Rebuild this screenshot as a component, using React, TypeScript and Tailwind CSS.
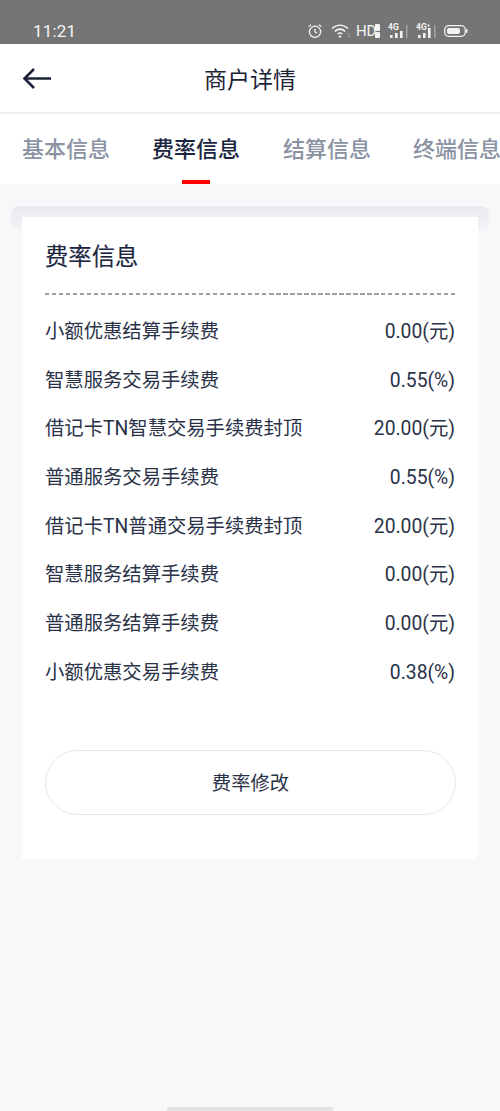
const FONT = "font-['Roboto','Noto_Sans_CJK_SC',sans-serif]";

const rows: [string, string][] = [
  ["小额优惠结算手续费", "0.00(元)"],
  ["智慧服务交易手续费", "0.55(%)"],
  ["借记卡TN智慧交易手续费封顶", "20.00(元)"],
  ["普通服务交易手续费", "0.55(%)"],
  ["借记卡TN普通交易手续费封顶", "20.00(元)"],
  ["智慧服务结算手续费", "0.00(元)"],
  ["普通服务结算手续费", "0.00(元)"],
  ["小额优惠交易手续费", "0.38(%)"],
];

function StatusIcons() {
  return (
    <div className="flex items-center text-[#f4f4f4]">
      <svg width="16" height="16" viewBox="0 0 16 16" fill="none" stroke="currentColor" strokeWidth="1.3" className="mr-[8px]">
        <circle cx="8" cy="8.8" r="5.6" />
        <path d="M8 5.8V9l2 1.2M1.8 3.6 4 1.8M14.2 3.6 12 1.8" />
      </svg>
      <svg width="20" height="16" viewBox="0 0 20 16" fill="none" stroke="currentColor" strokeWidth="1.5" className="mr-[5px]">
        <path d="M1 5.5C6 1 12 1 17 5.5M3.8 8.4C7 5.6 11 5.6 14.2 8.4M6.6 11C8 9.8 10 9.8 11.4 11" />
        <circle cx="9" cy="13.6" r="1.2" fill="currentColor" stroke="none" />
        <path d="M17 10.5l1.5 1.5M17 13.5h1.5" strokeWidth="0.8" opacity="0.7" />
      </svg>
      <span className="text-[15px] leading-none w-[19px] tracking-[-0.3px]">HD</span>
      <div className="flex flex-col gap-px mr-[8px]">
        <span className="w-[5px] h-[7px] bg-[#f4f4f4] rounded-[1px]" />
        <span className="w-[5px] h-[6px] bg-[#f4f4f4] rounded-[1px]" />
      </div>
      <svg width="20" height="16" viewBox="0 0 20 16" className="mr-[8px]">
        <text x="0" y="7" fontSize="8.5" fontWeight="700" fill="currentColor" fontFamily="Roboto">4G</text>
        <rect x="2" y="12" width="2.6" height="3" fill="currentColor" />
        <rect x="7" y="10" width="2.6" height="5" fill="currentColor" />
        <rect x="12" y="8" width="2.6" height="7" fill="currentColor" />
        <rect x="18" y="2" width="1.6" height="13" fill="#a0a0a0" />
      </svg>
      <svg width="20" height="16" viewBox="0 0 20 16" className="mr-[8px]">
        <text x="0" y="7" fontSize="8.5" fontWeight="700" fill="currentColor" fontFamily="Roboto">4G⁺</text>
        <rect x="2" y="12" width="2.6" height="3" fill="currentColor" />
        <rect x="7" y="10" width="2.6" height="5" fill="currentColor" />
        <rect x="12" y="5" width="2.6" height="10" fill="currentColor" />
        <rect x="18" y="2" width="1.6" height="13" fill="#a0a0a0" />
      </svg>
      <svg width="24" height="14" viewBox="0 0 24 14" fill="none">
        <rect x="0.7" y="1.7" width="20.6" height="10.6" rx="4" stroke="currentColor" strokeWidth="1.3" />
        <rect x="3" y="4" width="13" height="6" rx="2" fill="currentColor" />
        <rect x="22.2" y="5" width="1.4" height="4" rx="0.7" fill="currentColor" />
      </svg>
    </div>
  );
}

export default function App() {
  return (
    <div className={`${FONT} w-[500px] h-[1111px] relative overflow-hidden bg-[#f7f8fa] flex flex-col`}>
      <div className="h-[44px] bg-[#757575] flex items-end pb-[1px] pl-[33px] pr-[32px] justify-between">
        <span className="text-[#f4f4f4] text-[17px] leading-[24px] tracking-[0.2px]">11:21</span>
        <div className="pb-[4px]"><StatusIcons /></div>
      </div>

      <div className="h-[70px] bg-white border-b-[2px] border-[#efefef] flex items-center justify-center relative">
        <svg className="absolute left-[22px] top-[22px]" width="30" height="24" viewBox="0 0 30 24" fill="none" stroke="#1b2336" strokeWidth="2.6">
          <path d="M29 12.5H3M12 3 2.5 12.5 12 22" />
        </svg>
        <span className="text-[23px] text-[#1b2336] leading-none pt-[4px]">商户详情</span>
      </div>

      <div className="h-[70px] bg-white relative overflow-hidden flex items-start pt-[21px] whitespace-nowrap text-[22px] font-medium leading-[30px] text-[#8a92a3]">
        <span className="ml-[22px] w-[88px] shrink-0">基本信息</span>
        <span className="ml-[42px] w-[88px] shrink-0 text-[#1b2540] flex justify-center">费率信息</span>
        <span className="ml-[43px] w-[88px] shrink-0">结算信息</span>
        <span className="ml-[42px] w-[88px] shrink-0">终端信息</span>
        <span className="absolute left-[182px] bottom-0 w-[28px] h-[4px] bg-[#ff0000]" />
      </div>

      <div className="relative flex-1 pt-[33px] px-[22px]">
        <div className="absolute left-[11px] right-[11px] top-[22px] h-[23px] rounded-[8px] bg-[linear-gradient(#e8eaee,#f2f3f6)]" />
        <div className="relative bg-white h-[642px] pl-[23px] pr-[22px] flex flex-col">
          <div className="text-[23.33px] text-[#1b2540] leading-[30px] mt-[25px] [-webkit-text-stroke:0.15px_#1b2540]">费率信息</div>
          <div className="mt-[21px] h-[1.5px] bg-[repeating-linear-gradient(90deg,#9a9fa9_0,#9a9fa9_4.5px,transparent_4.5px,transparent_7px)]" />
          <div className="mt-[13.5px] flex flex-col">
            {rows.map(([label, value]) => (
              <div key={label} className="h-[48.7px] flex items-center justify-between text-[19.33px] text-[#2a3248]">
                <span>{label}</span>
                <span className="pr-[1px]">{value}</span>
              </div>
            ))}
          </div>
          <button className="mt-[52.5px] h-[65px] w-full rounded-full border border-[#e7e8ea] bg-white pt-[3px] text-[19.33px] text-[#2a3248]">
            费率修改
          </button>
        </div>
      </div>

      <div className="absolute left-[167px] bottom-0 w-[166px] h-[4px] bg-[#e2e3e5]" />
    </div>
  );
}
